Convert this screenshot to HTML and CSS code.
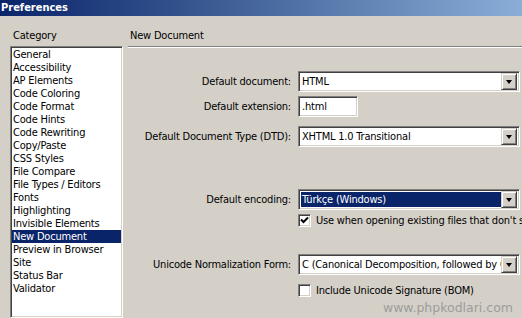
FILE: index.html
```html
<!DOCTYPE html>
<html>
<head>
<meta charset="utf-8">
<title>Preferences</title>
<link rel="stylesheet" href="styles.css">
</head>
<body>
<div class="window">
  <div class="titlebar">Preferences</div>
  <div class="content">
    <div class="left">
      <div class="caption">Category</div>
      <ul class="listbox">
        <li>General</li>
        <li>Accessibility</li>
        <li>AP Elements</li>
        <li>Code Coloring</li>
        <li>Code Format</li>
        <li>Code Hints</li>
        <li>Code Rewriting</li>
        <li>Copy/Paste</li>
        <li>CSS Styles</li>
        <li>File Compare</li>
        <li>File Types / Editors</li>
        <li>Fonts</li>
        <li>Highlighting</li>
        <li>Invisible Elements</li>
        <li class="selected">New Document</li>
        <li>Preview in Browser</li>
        <li>Site</li>
        <li>Status Bar</li>
        <li>Validator</li>
      </ul>
    </div>
    <div class="right">
      <div class="caption header">New Document</div>
      <div class="sep"></div>
      <div class="row r1">
        <div class="lbl">Default document:</div>
        <div class="combo wide"><span class="val">HTML</span><span class="btn"><span class="arrow"></span></span></div>
      </div>
      <div class="row r2">
        <div class="lbl">Default extension:</div>
        <div class="textbox"><span class="val">.html</span></div>
      </div>
      <div class="row r3">
        <div class="lbl">Default Document Type (DTD):</div>
        <div class="combo wide"><span class="val">XHTML 1.0 Transitional</span><span class="btn"><span class="arrow"></span></span></div>
      </div>
      <div class="row r4">
        <div class="lbl">Default encoding:</div>
        <div class="combo wide focused"><span class="val">Türkçe (Windows)</span><span class="btn"><span class="arrow"></span></span></div>
      </div>
      <div class="check r5">
        <span class="box"><svg width="9" height="9" viewBox="0 0 9 9"><path d="M1 3.5 L3.5 6 L8 1.5" fill="none" stroke="#000" stroke-width="2"/></svg></span>
        <span class="ctext">Use when opening existing files that don't specify an encoding</span>
      </div>
      <div class="row r6">
        <div class="lbl">Unicode Normalization Form:</div>
        <div class="combo wide"><span class="val">C (Canonical Decomposition, followed by Canonical Composition)</span><span class="btn"><span class="arrow"></span></span></div>
      </div>
      <div class="check r7">
        <span class="box"></span>
        <span class="ctext">Include Unicode Signature (BOM)</span>
      </div>
      <div class="watermark">www.phpkodlari.com</div>
    </div>
  </div>
</div>
</body>
</html>
```
FILE: styles.css
```css
html, body {
  margin: 0;
  padding: 0;
}
body {
  width: 522px;
  height: 318px;
  overflow: hidden;
  background: #d4d0c8;
  font-family: "DejaVu Sans Condensed", "DejaVu Sans", "Liberation Sans", sans-serif;
  font-size: 11px;
  letter-spacing: -0.2px;
  color: #000;
}
.window {
  width: 522px;
  height: 318px;
  display: flex;
  flex-direction: column;
}
.titlebar {
  height: 16px;
  line-height: 15px;
  padding-left: 1px;
  color: #fff;
  font-weight: bold;
  font-size: 11px;
  letter-spacing: 0;
  background: linear-gradient(to right, #0a246a 0%, #3a5a92 40%, #8aaed8 100%);
  flex: none;
}
.content {
  display: flex;
  flex: 1;
  min-height: 0;
}
.left {
  width: 113px;
  margin-left: 10px;
  flex: none;
  display: flex;
  flex-direction: column;
}
.caption {
  height: 13px;
  line-height: 13px;
  margin-top: 13px;
  padding-left: 3px;
}
.left .caption {
  margin-bottom: 4px;
}
.listbox {
  list-style: none;
  margin: 0;
  padding: 1px 1px 0 1px;
  flex: 1;
  background: #fff;
  border: 1px solid;
  border-color: #808080 #fff #fff #808080;
  box-shadow: inset 1px 1px #404040, inset -1px -1px #d4d0c8;
}
.listbox li {
  height: 13px;
  line-height: 13px;
  padding-left: 1px;
  white-space: nowrap;
}
.listbox li.selected {
  background: #0a246a;
  color: #fff;
}
.right {
  flex: 1;
  margin-left: 5px;
  display: flex;
  flex-direction: column;
  min-width: 0;
}
.header {
  padding-left: 2px;
}
.sep {
  margin-top: 4px;
  border-top: 1px solid #808080;
  border-bottom: 1px solid #fff;
  height: 0;
}
.row {
  display: flex;
  align-items: center;
  flex: none;
}
.lbl {
  width: 170px;
  padding-right: 7px;
  box-sizing: border-box;
  text-align: right;
  white-space: nowrap;
  flex: none;
}
.r1 { margin-top: 23px; }
.r2 { margin-top: 4px; }
.r3 { margin-top: 9px; }
.r4 { margin-top: 42px; }
.r5 { margin-top: 4px; }
.r6 { margin-top: 27px; }
.r7 { margin-top: 9px; }
.combo, .textbox {
  height: 21px;
  box-sizing: border-box;
  background: #fff;
  border: 1px solid;
  border-color: #808080 #fff #fff #808080;
  box-shadow: inset 1px 1px #404040, inset -1px -1px #d4d0c8;
  display: flex;
  align-items: center;
  padding: 2px;
  overflow: hidden;
}
.combo.wide {
  width: 222px;
}
.textbox {
  width: 60px;
}
.val {
  flex: 1;
  min-width: 0;
  white-space: nowrap;
  overflow: hidden;
  padding-left: 1px;
  height: 15px;
  line-height: 15px;
}
.focused .val {
  background: #0a246a;
  color: #fff;
}
.btn {
  flex: none;
  width: 16px;
  height: 17px;
  box-sizing: border-box;
  background: #d4d0c8;
  border: 1px solid;
  border-color: #d4d0c8 #404040 #404040 #d4d0c8;
  box-shadow: inset 1px 1px #fff, inset -1px -1px #808080;
  display: flex;
  align-items: center;
  justify-content: center;
}
.arrow {
  width: 0;
  height: 0;
  border-left: 3.5px solid transparent;
  border-right: 3.5px solid transparent;
  border-top: 4px solid #000;
}
.check {
  display: flex;
  align-items: center;
  margin-left: 170px;
  height: 13px;
  flex: none;
}
.box {
  width: 13px;
  height: 13px;
  box-sizing: border-box;
  background: #fff;
  border: 1px solid;
  border-color: #808080 #fff #fff #808080;
  box-shadow: inset 1px 1px #404040, inset -1px -1px #d4d0c8;
  display: flex;
  align-items: center;
  justify-content: center;
  flex: none;
}
.ctext {
  margin-left: 5px;
  white-space: nowrap;
}
.watermark {
  margin-top: 4px;
  text-align: right;
  padding-right: 9px;
  color: #9c9c9c;
  font-family: "DejaVu Sans", sans-serif;
  font-size: 12.5px;
  letter-spacing: 0;
  line-height: 14px;
}
```
